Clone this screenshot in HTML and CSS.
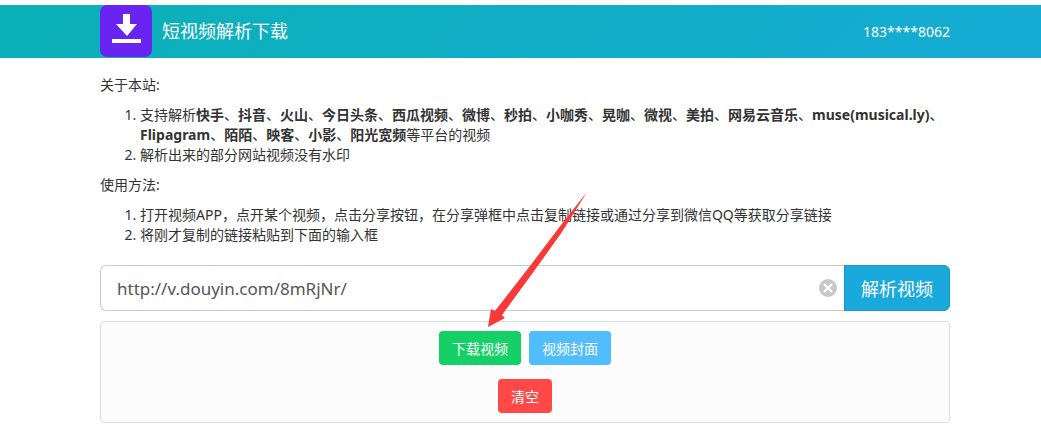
FILE: index.html
```html
<!DOCTYPE html>
<html lang="zh-CN">
<head>
    <meta charset="UTF-8">
    <meta name="viewport" content="width=device-width, initial-scale=1.0">
    <title>短视频解析下载</title>
    <link rel="stylesheet" href="styles.css">
</head>
<body>
    <header class="navbar">
        <div class="container navbar-inner">
            <a href="#" class="brand">
                <svg class="brand-logo" viewBox="0 0 52 52" aria-hidden="true">
                    <rect width="52" height="52" rx="7" fill="#6a24f2"/>
                    <path d="M23 9h7v10h7L27 31 16 19h7z" fill="#fff"/>
                    <rect x="12" y="34" width="29" height="4" fill="#fff"/>
                </svg>
                <span>短视频解析下载</span>
            </a>
            <a href="#" class="user">183****8062</a>
        </div>
    </header>
    <main class="container content">
        <p>关于本站:</p>
        <ol>
            <li>支持解析<b>快手</b>、<b>抖音</b>、<b>火山</b>、<b>今日头条</b>、<b>西瓜视频</b>、<b>微博</b>、<b>秒拍</b>、<b>小咖秀</b>、<b>晃咖</b>、<b>微视</b>、<b>美拍</b>、<b>网易云音乐</b>、<b>muse(musical.ly)</b>、<b>Flipagram</b>、<b>陌陌</b>、<b>映客</b>、<b>小影</b>、<b>阳光宽频</b>等平台的视频</li>
            <li>解析出来的部分网站视频没有水印</li>
        </ol>
        <p>使用方法:</p>
        <ol>
            <li>打开视频APP，点开某个视频，点击分享按钮，在分享弹框中点击复制链接或通过分享到微信QQ等获取分享链接</li>
            <li>将刚才复制的链接粘贴到下面的输入框</li>
        </ol>
        <form class="search">
            <div class="search-box">
                <input type="text" class="search-input" value="http://v.douyin.com/8mRjNr/" aria-label="视频链接">
                <button type="reset" class="search-clear" aria-label="清除">
                    <svg viewBox="0 0 18 18" width="18" height="18">
                        <circle cx="9" cy="9" r="9" fill="#c8c8c8"/>
                        <path d="M5 5l8 8M13 5l-8 8" stroke="#fff" stroke-width="2.400"/>
                    </svg>
                </button>
            </div>
            <button type="button" class="search-btn">解析视频</button>
        </form>
        <div class="result">
            <div class="result-row">
                <button type="button" class="btn btn-green">下载视频</button>
                <button type="button" class="btn btn-blue">视频封面</button>
            </div>
            <div class="result-row">
                <button type="button" class="btn btn-red">清空</button>
            </div>
        </div>
        <!-- 指向下载按钮的箭头 -->
        <svg class="arrow" viewBox="0 0 99 135" aria-hidden="true">
            <path d="M99 0L74 40 49 75 14 123l3 3-17 9 3-18 4 2L42 74 73 33z" fill="#fb3838"/>
        </svg>
    </main>
</body>
</html>
```
FILE: styles.css
```css
* {
    box-sizing: border-box;
}
body {
    margin: 0;
    padding-top: 5px;
    background-color: #fff;
    color: #333;
    font: 14px/20px "Noto Sans", "Noto Sans CJK SC", sans-serif;
}
a {
    color: inherit;
    text-decoration: none;
}
button,
input {
    font-family: inherit;
}
button {
    cursor: pointer;
}
.navbar,
.content {
    padding-left: 9px;
}
.navbar {
    background: linear-gradient(135deg, #0ab1b6, #16abd5);
    color: #fff;
}
.container {
    max-width: 850px;
    margin-inline: auto;
}
.navbar-inner {
    display: flex;
    justify-content: space-between;
    align-items: center;
    height: 53px;
}
.brand {
    display: flex;
    align-items: center;
    align-self: flex-start;
    gap: 10px;
    font-size: 18px;
}
.brand-logo {
    width: 52px;
    height: 52px;
}
.content {
    position: relative;
    max-width: 859px;
    padding-top: 17px;
}
.content p {
    margin: 0 0 10px;
}
.content ol {
    margin: 0 0 10px;
    padding-left: 40px;
}
.search {
    display: flex;
    margin-top: 20px;
}
.search-box {
    display: flex;
    align-items: center;
    flex: 1;
    height: 46px;
    padding: 0 7px 0 16px;
    border: 1px solid #ccc;
    border-right: 0;
    border-radius: 6px 0 0 6px;
}
.search-input {
    flex: 1;
    min-width: 0;
    padding: 0;
    border: 0;
    outline: 0;
    background: none;
    color: #555;
    font-size: 17px;
}
.search-clear {
    display: flex;
    padding: 0;
    border: 0;
    background: none;
}
.search-btn {
    padding: 0 16px;
    border: 1px solid #1b97c0;
    border-radius: 0 6px 6px 0;
    background-color: #1aa9dc;
    color: #fff;
    font-size: 18px;
}
.result {
    display: flex;
    flex-direction: column;
    gap: 14px;
    margin-top: 10px;
    padding: 9px;
    border: 1px solid #ddd;
    border-radius: 4px;
    background-color: #fcfcfc;
}
.result-row {
    display: flex;
    justify-content: center;
    gap: 8px;
}
.btn {
    height: 34px;
    padding: 0 13px;
    border: 0;
    border-radius: 4px;
    color: #fff;
    font-size: 14px;
}
.btn-green {
    background-color: #15d067;
}
.btn-blue {
    background-color: #50bdff;
}
.btn-red {
    background-color: #ff4949;
}
.arrow {
    position: absolute;
    top: 134px;
    left: 397px;
    width: 99px;
    height: 135px;
    pointer-events: none;
}
```
